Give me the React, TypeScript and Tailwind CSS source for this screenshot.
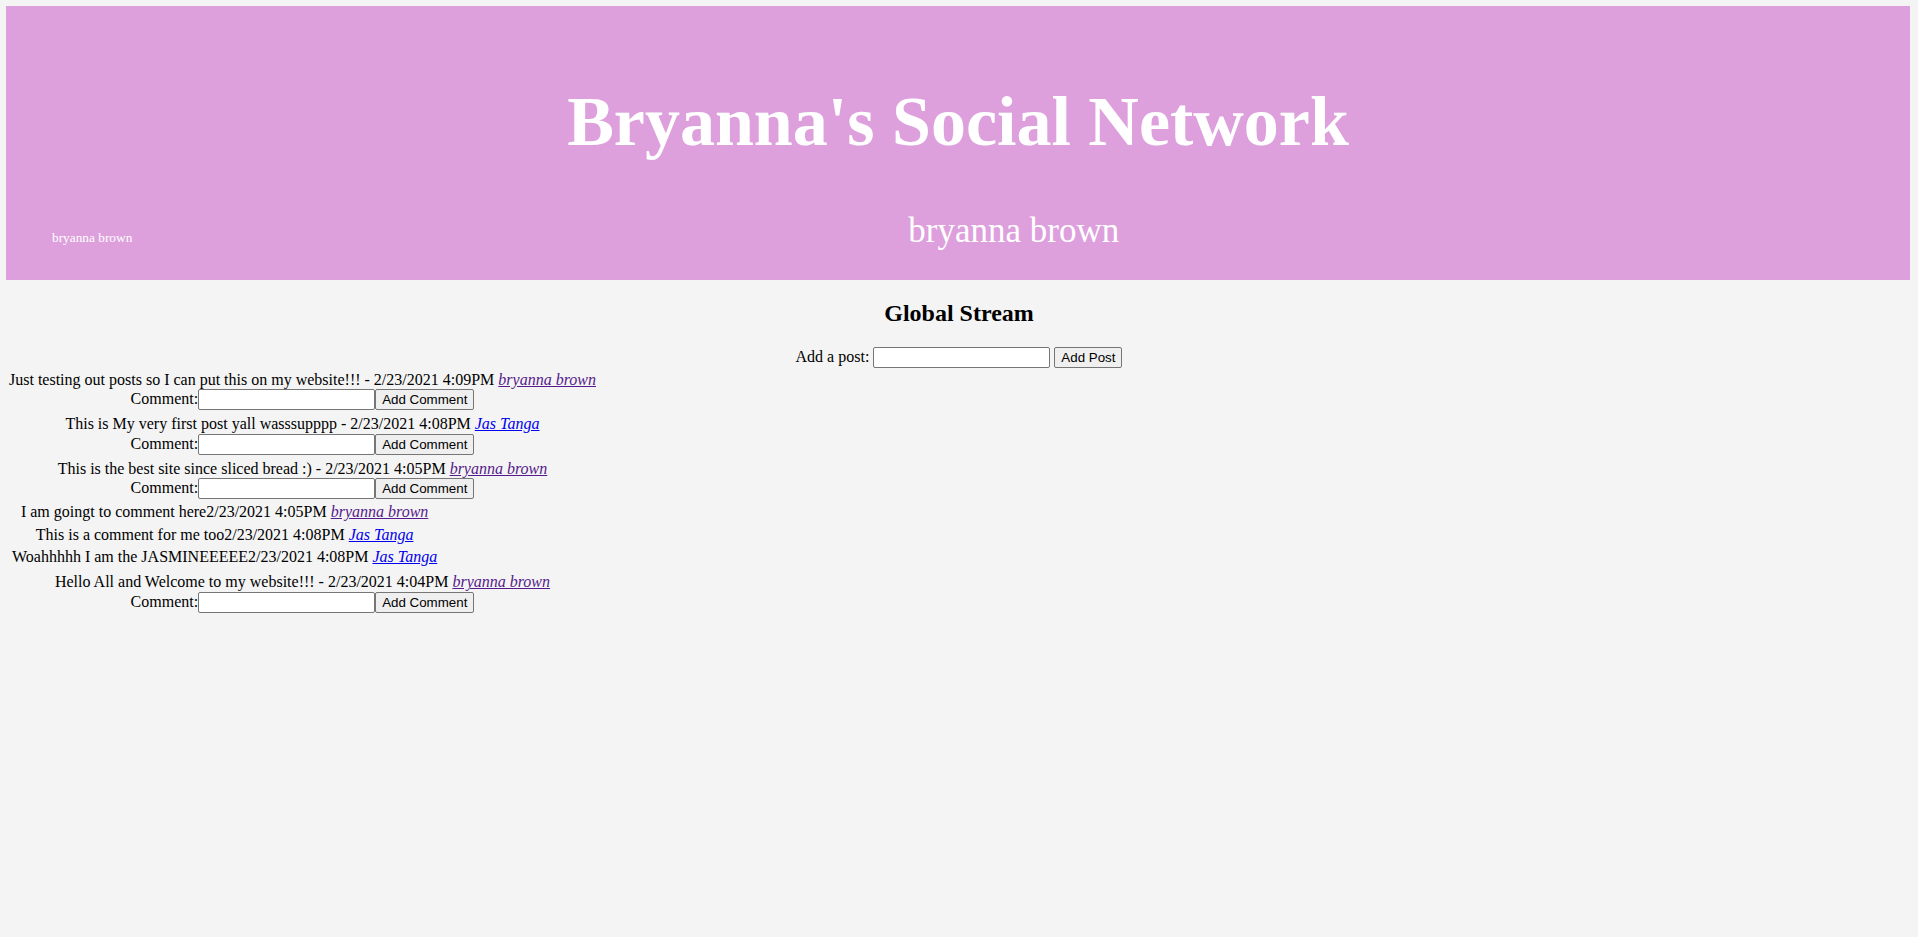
import type { FormEvent } from 'react';

type Entry = { text: string; author: string };
type Post = Entry & { comments: Entry[] };

const posts: Post[] = [
  {
    text: 'Just testing out posts so I can put this on my website!!! - 2/23/2021 4:09PM',
    author: 'bryanna brown',
    comments: [],
  },
  {
    text: 'This is My very first post yall wasssupppp - 2/23/2021 4:08PM',
    author: 'Jas Tanga',
    comments: [],
  },
  {
    text: 'This is the best site since sliced bread :) - 2/23/2021 4:05PM',
    author: 'bryanna brown',
    comments: [
      { text: 'I am goingt to comment here2/23/2021 4:05PM', author: 'bryanna brown' },
      { text: 'This is a comment for me too2/23/2021 4:08PM', author: 'Jas Tanga' },
      { text: 'Woahhhhh I am the JASMINEEEEE2/23/2021 4:08PM', author: 'Jas Tanga' },
    ],
  },
  {
    text: 'Hello All and Welcome to my website!!! - 2/23/2021 4:04PM',
    author: 'bryanna brown',
    comments: [],
  },
];

const stop = (e: FormEvent) => e.preventDefault();

function AuthorLink({ name }: { name: string }) {
  // own profile shows as a visited link
  const visited = name === 'bryanna brown';
  return (
    <a
      href="#"
      className={visited ? 'italic underline text-[#551a8b]' : 'italic underline text-[#0000ee]'}
    >
      {name}
    </a>
  );
}

function TextBox() {
  return (
    <input
      type="text"
      className="h-[21px] w-[177px] rounded-[2px] border border-[#767676] bg-white px-[2px] py-px font-['Liberation_Sans',Arial,sans-serif] text-[13.33px] text-black"
    />
  );
}

function SmallButton({ label }: { label: string }) {
  return (
    <button
      type="submit"
      className="h-[21px] rounded-[2px] border border-[#767676] bg-[#efefef] px-[6px] font-['Liberation_Sans',Arial,sans-serif] text-[13.33px] leading-[15px] text-black"
    >
      {label}
    </button>
  );
}

function CommentForm() {
  return (
    <form onSubmit={stop} className="flex h-[22px] items-baseline justify-center">
      <span className="leading-[18.4px]">Comment:</span>
      <TextBox />
      <SmallButton label="Add Comment" />
    </form>
  );
}

export default function App() {
  return (
    <div className="min-h-screen bg-[#f4f4f4] px-[6px] pt-[6px] text-center font-['Liberation_Serif','Times_New_Roman',serif] text-[16px] text-black">
      {/* Banner */}
      <header className="mr-[2px] h-[274px] bg-[#dda0dd] pt-[76px] text-white">
        <h1 className="text-[70px] font-bold leading-[80px]">Bryanna's Social Network</h1>
        <div className="mt-[49px] flex items-baseline pl-[46px] text-left">
          <span className="text-[13.33px] leading-[16px]">bryanna brown</span>
          <span className="ml-[776px] text-[35px] leading-[40px]">bryanna brown</span>
        </div>
      </header>

      <h2 className="mt-[19px] text-[24px] font-bold leading-[28px]">Global Stream</h2>

      <form onSubmit={stop} className="mt-[20px] flex h-[21px] items-baseline justify-center gap-[4px]">
        <span className="leading-[18.4px]">Add a post:</span>
        <TextBox />
        <SmallButton label="Add Post" />
      </form>

      {/* Stream */}
      <table className="border-separate border-spacing-[2px]">
        <tbody>
          {posts.map((post) => (
            <tr key={post.text}>
              <td className="p-px text-center">
                <div className="whitespace-nowrap leading-[18.4px]">
                  {post.text} <AuthorLink name={post.author} />
                </div>
                <CommentForm />
                {post.comments.length > 0 && (
                  <table className="border-separate border-spacing-[2px]">
                    <tbody>
                      {post.comments.map((c) => (
                        <tr key={c.text}>
                          <td className="whitespace-nowrap p-px text-center leading-[18.4px]">
                            {c.text} <AuthorLink name={c.author} />
                          </td>
                        </tr>
                      ))}
                    </tbody>
                  </table>
                )}
              </td>
            </tr>
          ))}
        </tbody>
      </table>
    </div>
  );
}
